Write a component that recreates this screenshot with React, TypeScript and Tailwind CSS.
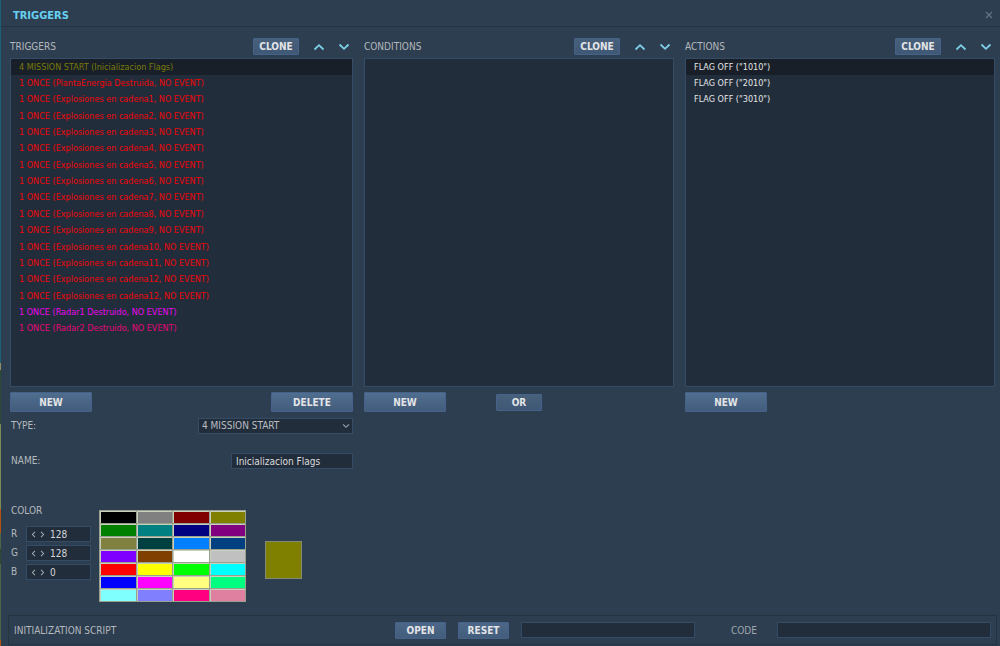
import { useState } from 'react';
import type { ReactNode } from 'react';
import clsx from 'clsx';

type Row = { text: string; cls: string };

const TRIGGERS: Row[] = [
  { text: '4 MISSION START (Inicializacion Flags)', cls: 'text-[#7a7b08]' },
  { text: '1 ONCE (PlantaEnergia Destruida, NO EVENT)', cls: 'text-[#ee060a]' },
  ...[1, 2, 3, 4, 5, 6, 7, 8, 9, 10, 11, 12, 12].map((n) => ({
    text: `1 ONCE (Explosiones en cadena${n}, NO EVENT)`,
    cls: 'text-[#ee060a]',
  })),
  { text: '1 ONCE (Radar1 Destruido, NO EVENT)', cls: 'text-[#ec04ee]' },
  { text: '1 ONCE (Radar2 Destruido, NO EVENT)', cls: 'text-[#e6067a]' },
];

const ACTIONS: Row[] = ['1010', '2010', '3010'].map((flag) => ({
  text: `FLAG OFF ("${flag}")`,
  cls: 'text-[#e4e6e7]',
}));

const PALETTE = [
  '#000000', '#808080', '#800000', '#808000',
  '#008000', '#008080', '#000080', '#800080',
  '#808040', '#004040', '#0080ff', '#004080',
  '#8000ff', '#804000', '#ffffff', '#c0c0c0',
  '#ff0000', '#ffff00', '#00ff00', '#00ffff',
  '#0000ff', '#ff00ff', '#ffff80', '#00ff80',
  '#80ffff', '#8080ff', '#ff0080', '#e080a0',
];

const FIELD = 'h-4 border border-[#354c66] bg-[#222d3b] outline-none';

function Chevron({ up, className }: { up?: boolean; className?: string }) {
  return (
    <svg viewBox="0 0 12 8" className={className} fill="none" stroke="currentColor" strokeWidth="1.8">
      <path d={up ? 'M1.500 6.500 6 2.200l4.500 4.300' : 'M1.500 1.500 6 5.800l4.500-4.300'} />
    </svg>
  );
}

function Button({ children, size = 'sm' }: { children: ReactNode; size?: 'sm' | 'md' | 'lg' }) {
  return (
    <button
      type="button"
      className={clsx(
        'flex shrink-0 items-center justify-center rounded-[1px] border border-[#45638a] bg-linear-to-b pt-px text-[10px] font-bold leading-none text-[#e2e4e6]',
        size === 'sm' && 'h-[17px] w-[46px] from-[#48607a] to-[#3f5876]',
        size === 'md' && 'h-[17px] w-[51px] from-[#4c6788] to-[#435d7b]',
        size === 'lg' && 'h-5 w-[82px] from-[#506e90] to-[#435c7b]',
      )}
    >
      {children}
    </button>
  );
}

function Panel({ title, rows, children }: { title: string; rows: Row[]; children: ReactNode }) {
  return (
    <section aria-label={title} className="min-w-0">
      <header className="flex h-5 items-start justify-between">
        <h2 className="pt-px text-[10px] leading-4 text-[#b4b9be]">{title}</h2>
        <div className="flex items-center pr-[3px]">
          <Button>CLONE</Button>
          <button type="button" aria-label={`Move up in ${title}`} className="ml-[14px] text-[#7ecfe8]">
            <Chevron up className="h-2 w-3" />
          </button>
          <button type="button" aria-label={`Move down in ${title}`} className="ml-[13px] text-[#7ecfe8]">
            <Chevron className="h-2 w-3" />
          </button>
        </div>
      </header>
      <ul className="grid h-[329px] grid-rows-[repeat(20,minmax(0,1fr))] border border-[#354c66] bg-[#222d3b]">
        {rows.map((row, i) => (
          <li
            key={i}
            className={clsx('flex items-center truncate pl-2 text-[9px] leading-none', row.cls, i === 0 && 'bg-[#181f28]')}
          >
            {row.text}
          </li>
        ))}
      </ul>
      {children}
    </section>
  );
}

function Channel({ name, value }: { name: string; value: number }) {
  return (
    <div className="flex h-4 items-center">
      <label htmlFor={`ch-${name}`} className="w-[15px] text-[10px] leading-4 text-[#b4b9be]">
        {name}
      </label>
      <div className={clsx(FIELD, 'flex w-[65px] items-center pl-[3px]')}>
        <button type="button" aria-label={`Decrease ${name}`} className="text-[#a3aab1]">
          <Chevron up className="h-[5px] w-[7px] -rotate-90" />
        </button>
        <button type="button" aria-label={`Increase ${name}`} className="ml-[2px] text-[#a3aab1]">
          <Chevron up className="h-[5px] w-[7px] rotate-90" />
        </button>
        <input
          id={`ch-${name}`}
          defaultValue={value}
          className="ml-1 w-8 min-w-0 text-[10px] leading-none text-[#d4d7d9] outline-none"
        />
      </div>
    </div>
  );
}

// Sliver of the map that shows beside the window
function MapEdge() {
  return (
    <div className="flex w-px shrink-0 flex-col">
      <div className="grow-[363] bg-[#1c6078]" />
      <div className="grow-[7] bg-[#918c68]" />
      <div className="grow-[54] bg-[#2c4a31]" />
      <div className="grow-[85] bg-[#7f8b54]" />
      <div className="grow-[24] bg-[#b5500f]" />
      <div className="grow-[16] bg-[#4c6544]" />
      <div className="grow-[15] bg-[#2c4a31]" />
      <div className="grow-[76] bg-[#4c6544]" />
      <div className="grow-[6] bg-[#b5500f]" />
    </div>
  );
}

export default function App() {
  const [color, setColor] = useState('#808000');

  return (
    <div className="flex min-h-screen bg-[#2d3e50] font-['DejaVu_Sans_Condensed','DejaVu_Sans',sans-serif] [font-stretch:condensed]">
      <MapEdge />
      <div className="flex min-w-0 grow flex-col">
        <header className="flex h-[27px] items-center justify-between border-b border-[#253240] pl-3 pr-[7px] pt-1">
          <h1 className="text-[11px] font-bold leading-none text-[#67d0f0]">TRIGGERS</h1>
          <button type="button" aria-label="Close" className="text-[#5f7489]">
            <svg viewBox="0 0 8 8" className="size-2" stroke="currentColor" strokeWidth="1.2">
              <path d="M1 1l6 6M7 1L1 7" />
            </svg>
          </button>
        </header>

        <main className="grid grid-cols-[343fr_310fr_310fr] gap-[11px] pl-[9px] pr-[5px] pt-[11px]">
          <Panel title="TRIGGERS" rows={TRIGGERS}>
            <div className="flex justify-between pt-[5px]">
              <Button size="lg">NEW</Button>
              <Button size="lg">DELETE</Button>
            </div>

            <div className="flex items-center justify-between pt-[6px]">
              <label htmlFor="type" className="pl-px text-[10px] leading-4 text-[#b4b9be]">TYPE:</label>
              <div className="relative">
                <select id="type" className={clsx(FIELD, 'block w-[155px] appearance-none pl-[3px] text-[10px] leading-[14px] text-[#b9bdc1]')}>
                  <option>4 MISSION START</option>
                  <option>1 ONCE</option>
                </select>
                <Chevron className="pointer-events-none absolute right-[3px] top-[5px] h-[6px] w-2 text-[#8f979f]" />
              </div>
            </div>

            <div className="flex items-center justify-between pt-[19px]">
              <label htmlFor="name" className="pl-px text-[10px] leading-4 text-[#b4b9be]">NAME:</label>
              <input
                id="name"
                defaultValue="Inicializacion Flags"
                className={clsx(FIELD, 'w-[122px] pl-1 text-[10px] leading-none text-[#dcdedf]')}
              />
            </div>

            <div className="flex pl-px pt-[34px]">
              <div className="w-[88px]">
                <h3 className="pb-[7px] text-[10px] leading-4 text-[#b4b9be]">COLOR</h3>
                <div className="flex flex-col gap-[3px]">
                  <Channel name="R" value={128} />
                  <Channel name="G" value={128} />
                  <Channel name="B" value={0} />
                </div>
              </div>
              <div className="mt-[7px] grid h-[92px] w-[147px] grid-cols-4 grid-rows-7 gap-px border border-[#9aa08e] bg-[#9aa08e]">
                {PALETTE.map((c) => (
                  <button
                    key={c}
                    type="button"
                    aria-label={c}
                    onClick={() => setColor(c)}
                    className="border-l border-t border-[#c9d0bd]"
                    style={{ backgroundColor: c }}
                  />
                ))}
              </div>
              <div
                className="ml-[19px] mt-[38px] h-[38px] w-[37px] border border-[#858a76]"
                style={{ backgroundColor: color }}
              />
            </div>
          </Panel>

          <Panel title="CONDITIONS" rows={[]}>
            <div className="flex items-center gap-[50px] pt-[5px]">
              <Button size="lg">NEW</Button>
              <Button>OR</Button>
            </div>
          </Panel>

          <Panel title="ACTIONS" rows={ACTIONS}>
            <div className="flex pt-[5px]">
              <Button size="lg">NEW</Button>
            </div>
          </Panel>
        </main>

        <footer className="mb-px ml-[7px] mr-[3px] mt-auto flex h-[30px] items-center border border-[#253240] px-[5px]">
          <label htmlFor="script" className="mr-auto text-[10px] text-[#b4b9be]">INITIALIZATION SCRIPT</label>
          <div className="flex gap-3 pr-3">
            <Button size="md">OPEN</Button>
            <Button size="md">RESET</Button>
          </div>
          <input id="script" className={clsx(FIELD, 'w-[174px] px-1 text-[10px] text-[#dcdedf]')} />
          <label htmlFor="code" className="w-[82px] pl-9 text-[10px] text-[#9fa6ad]">CODE</label>
          <input id="code" className={clsx(FIELD, 'w-[214px] px-1 text-[10px] text-[#dcdedf]')} />
        </footer>
      </div>
    </div>
  );
}
